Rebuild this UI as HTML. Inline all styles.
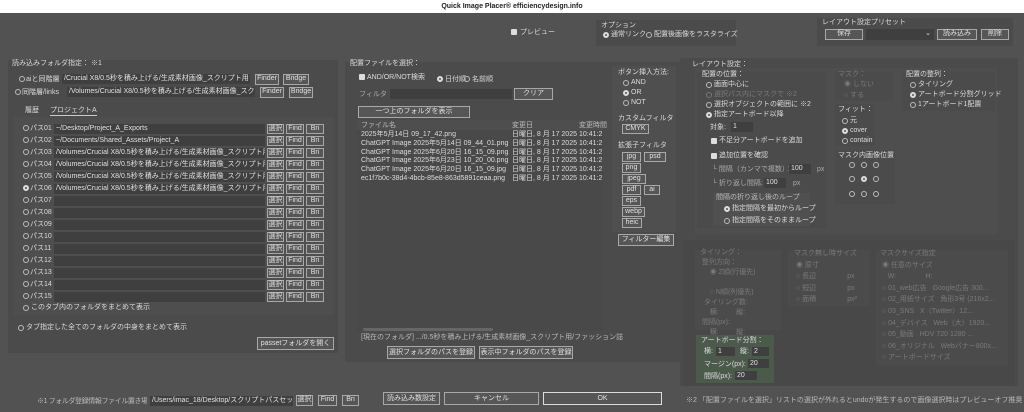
<!DOCTYPE html><html><head><meta charset="utf-8"><style>
*{box-sizing:border-box;margin:0;padding:0}
body{width:1024px;height:412px;overflow:hidden;background:#525252;font-family:"Liberation Sans","Noto Sans CJK JP",sans-serif;font-size:7px;color:#dcdcdc;position:relative}
div,span{position:absolute;white-space:nowrap}
.t{line-height:9px}
.b{border:1px solid #a8a8a8;text-align:center;line-height:8px;background:#565656;color:#e0e0e0}
.f{background:#3f3f3f;line-height:9px;padding-left:2px;overflow:hidden;color:#e2e2e2}
.g{background:#4b4b4b}
.r{width:6px;height:6px;border:1px solid #bbb;border-radius:50%}
.rs{width:6px;height:6px;border:2px solid #ddd;border-radius:50%;background:#555}
.c{width:6px;height:6px;background:#ddd;border-radius:1px}
.d{color:#7a7a7a}
</style></head><body>
<div style="left:0;top:0;width:1024px;height:13px;background:#fff;color:#222;font-weight:bold;text-align:center;line-height:13px;font-size:7px">Quick Image Placer® efficiencydesign.info</div>

<span class="c" style="left:511px;top:29px"></span><span class="t" style="left:520px;top:28px">プレビュー</span>
<div class="g" style="left:596px;top:20px;width:140px;height:26px"></div>
<span class="t" style="left:601px;top:21px">オプション</span>
<span class="rs" style="left:603px;top:32px"></span><span class="t" style="left:611px;top:30px">通常リンク</span>
<span class="r" style="left:646px;top:32px"></span><span class="t" style="left:654px;top:30px">配置後画像をラスタライズ</span>
<div class="g" style="left:817px;top:18px;width:196px;height:28px"></div>
<span class="t" style="left:822px;top:18px">レイアウト設定プリセット</span>
<div class="b" style="left:825px;top:29px;width:38px;height:11px">保存</div>
<div class="f" style="left:866px;top:29px;width:68px;height:11px;text-align:right;padding-right:3px">⌄</div>
<div class="b" style="left:937px;top:29px;width:40px;height:11px">読み込み</div>
<div class="b" style="left:981px;top:29px;width:28px;height:11px">削除</div>

<div class="g" style="left:8px;top:60px;width:330px;height:293px"></div>
<span class="t" style="left:12px;top:59px">読み込みフォルダ指定： ※1</span>
<span class="r" style="left:19px;top:76px"></span><span class="t" style="left:26px;top:75px">aiと同階層</span>
<div class="f" style="left:62px;top:74px;width:188px;height:10px">/Crucial X8/0.5秒を積み上げる/生成素材画像_スクリプト用</div>
<div class="b" style="left:255px;top:74px;width:24px;height:11px">Finder</div>
<div class="b" style="left:283px;top:74px;width:26px;height:11px">Bridge</div>
<span class="r" style="left:15px;top:89px"></span><span class="t" style="left:22px;top:88px">同階層/links</span>
<div class="f" style="left:67px;top:87px;width:188px;height:10px">/Volumes/Crucial X8/0.5秒を積み上げる/生成素材画像_スクリプ</div>
<div class="b" style="left:260px;top:87px;width:24px;height:11px">Finder</div>
<div class="b" style="left:289px;top:87px;width:24px;height:11px">Bridge</div>
<span class="t" style="left:25px;top:106px">履歴</span>
<span class="t" style="left:50px;top:106px;border-bottom:1px solid #ccc">プロジェクトA</span>
<div class="g" style="left:14px;top:117px;width:320px;height:198px;background:#4e4e4e"></div>

<span class="r" style="left:23px;top:125px"></span><span class="t" style="left:30px;top:124px">パス01</span><div class="f" style="left:54px;top:124px;width:211px;height:10px">~/Desktop/Project_A_Exports</div>
<span class="r" style="left:23px;top:137px"></span><span class="t" style="left:30px;top:136px">パス02</span><div class="f" style="left:54px;top:136px;width:211px;height:10px">~/Documents/Shared_Assets/Project_A</div>
<span class="r" style="left:23px;top:149px"></span><span class="t" style="left:30px;top:148px">パス03</span><div class="f" style="left:54px;top:148px;width:211px;height:10px">/Volumes/Crucial X8/0.5秒を積み上げる/生成素材画像_スクリプト用/風</div>
<span class="r" style="left:23px;top:161px"></span><span class="t" style="left:30px;top:160px">パス04</span><div class="f" style="left:54px;top:160px;width:211px;height:10px">/Volumes/Crucial X8/0.5秒を積み上げる/生成素材画像_スクリプト用/フ</div>
<span class="r" style="left:23px;top:173px"></span><span class="t" style="left:30px;top:172px">パス05</span><div class="f" style="left:54px;top:172px;width:211px;height:10px">/Volumes/Crucial X8/0.5秒を積み上げる/生成素材画像_スクリプト用/エ</div>
<span class="rs" style="left:23px;top:185px"></span><span class="t" style="left:30px;top:184px">パス06</span><div class="f" style="left:54px;top:184px;width:211px;height:10px">/Volumes/Crucial X8/0.5秒を積み上げる/生成素材画像_スクリプト用/フ</div>
<span class="r" style="left:23px;top:197px"></span><span class="t" style="left:30px;top:196px">パス07</span><div class="f" style="left:54px;top:196px;width:211px;height:10px"></div>
<span class="r" style="left:23px;top:209px"></span><span class="t" style="left:30px;top:208px">パス08</span><div class="f" style="left:54px;top:208px;width:211px;height:10px"></div>
<span class="r" style="left:23px;top:221px"></span><span class="t" style="left:30px;top:220px">パス09</span><div class="f" style="left:54px;top:220px;width:211px;height:10px"></div>
<span class="r" style="left:23px;top:233px"></span><span class="t" style="left:30px;top:232px">パス10</span><div class="f" style="left:54px;top:232px;width:211px;height:10px"></div>
<span class="r" style="left:23px;top:245px"></span><span class="t" style="left:30px;top:244px">パス11</span><div class="f" style="left:54px;top:244px;width:211px;height:10px"></div>
<span class="r" style="left:23px;top:257px"></span><span class="t" style="left:30px;top:256px">パス12</span><div class="f" style="left:54px;top:256px;width:211px;height:10px"></div>
<span class="r" style="left:23px;top:269px"></span><span class="t" style="left:30px;top:268px">パス13</span><div class="f" style="left:54px;top:268px;width:211px;height:10px"></div>
<span class="r" style="left:23px;top:281px"></span><span class="t" style="left:30px;top:280px">パス14</span><div class="f" style="left:54px;top:280px;width:211px;height:10px"></div>
<span class="r" style="left:23px;top:293px"></span><span class="t" style="left:30px;top:292px">パス15</span><div class="f" style="left:54px;top:292px;width:211px;height:10px"></div>
<div style="left:267px;top:124px;width:60px;height:180px">
<div class="b" style="left:0;top:0;width:17px;height:10px">選択</div><div class="b" style="left:19px;top:0;width:18px;height:10px">Find</div><div class="b" style="left:39px;top:0;width:18px;height:10px">Bri</div>
<div class="b" style="left:0;top:12px;width:17px;height:10px">選択</div><div class="b" style="left:19px;top:12px;width:18px;height:10px">Find</div><div class="b" style="left:39px;top:12px;width:18px;height:10px">Bri</div>
<div class="b" style="left:0;top:24px;width:17px;height:10px">選択</div><div class="b" style="left:19px;top:24px;width:18px;height:10px">Find</div><div class="b" style="left:39px;top:24px;width:18px;height:10px">Bri</div>
<div class="b" style="left:0;top:36px;width:17px;height:10px">選択</div><div class="b" style="left:19px;top:36px;width:18px;height:10px">Find</div><div class="b" style="left:39px;top:36px;width:18px;height:10px">Bri</div>
<div class="b" style="left:0;top:48px;width:17px;height:10px">選択</div><div class="b" style="left:19px;top:48px;width:18px;height:10px">Find</div><div class="b" style="left:39px;top:48px;width:18px;height:10px">Bri</div>
<div class="b" style="left:0;top:60px;width:17px;height:10px">選択</div><div class="b" style="left:19px;top:60px;width:18px;height:10px">Find</div><div class="b" style="left:39px;top:60px;width:18px;height:10px">Bri</div>
<div class="b" style="left:0;top:72px;width:17px;height:10px">選択</div><div class="b" style="left:19px;top:72px;width:18px;height:10px">Find</div><div class="b" style="left:39px;top:72px;width:18px;height:10px">Bri</div>
<div class="b" style="left:0;top:84px;width:17px;height:10px">選択</div><div class="b" style="left:19px;top:84px;width:18px;height:10px">Find</div><div class="b" style="left:39px;top:84px;width:18px;height:10px">Bri</div>
<div class="b" style="left:0;top:96px;width:17px;height:10px">選択</div><div class="b" style="left:19px;top:96px;width:18px;height:10px">Find</div><div class="b" style="left:39px;top:96px;width:18px;height:10px">Bri</div>
<div class="b" style="left:0;top:108px;width:17px;height:10px">選択</div><div class="b" style="left:19px;top:108px;width:18px;height:10px">Find</div><div class="b" style="left:39px;top:108px;width:18px;height:10px">Bri</div>
<div class="b" style="left:0;top:120px;width:17px;height:10px">選択</div><div class="b" style="left:19px;top:120px;width:18px;height:10px">Find</div><div class="b" style="left:39px;top:120px;width:18px;height:10px">Bri</div>
<div class="b" style="left:0;top:132px;width:17px;height:10px">選択</div><div class="b" style="left:19px;top:132px;width:18px;height:10px">Find</div><div class="b" style="left:39px;top:132px;width:18px;height:10px">Bri</div>
<div class="b" style="left:0;top:144px;width:17px;height:10px">選択</div><div class="b" style="left:19px;top:144px;width:18px;height:10px">Find</div><div class="b" style="left:39px;top:144px;width:18px;height:10px">Bri</div>
<div class="b" style="left:0;top:156px;width:17px;height:10px">選択</div><div class="b" style="left:19px;top:156px;width:18px;height:10px">Find</div><div class="b" style="left:39px;top:156px;width:18px;height:10px">Bri</div>
<div class="b" style="left:0;top:168px;width:17px;height:10px">選択</div><div class="b" style="left:19px;top:168px;width:18px;height:10px">Find</div><div class="b" style="left:39px;top:168px;width:18px;height:10px">Bri</div>
</div>
<span class="r" style="left:23px;top:305px"></span><span class="t" style="left:31px;top:303px">このタブ内のフォルダをまとめて表示</span>
<span class="r" style="left:18px;top:325px"></span><span class="t" style="left:26px;top:323px">タブ指定した全てのフォルダの中身をまとめて表示</span>
<div class="b" style="left:257px;top:337px;width:77px;height:13px;line-height:11px">passetフォルダを開く</div>

<div class="g" style="left:345px;top:62px;width:335px;height:300px"></div>
<span class="t" style="left:350px;top:59px">配置ファイルを選択：</span>
<span class="c" style="left:359px;top:74px"></span><span class="t" style="left:367px;top:73px">AND/OR/NOT検索</span>
<span class="rs" style="left:437px;top:76px"></span><span class="t" style="left:445px;top:75px">日付順</span>
<span class="r" style="left:464px;top:76px"></span><span class="t" style="left:472px;top:75px">名前順</span>
<span class="t" style="left:359px;top:90px;color:#aaa">フィルタ：</span>
<div class="f" style="left:390px;top:89px;width:122px;height:10px"></div>
<div class="b" style="left:514px;top:88px;width:39px;height:12px;line-height:10px">クリア</div>
<div class="b" style="left:358px;top:106px;width:112px;height:12px;line-height:10px">一つ上のフォルダを表示</div>
<div style="left:357px;top:120px;width:246px;height:211px;background:#494949"></div>
<div style="left:357px;top:120px;width:246px;height:10px;background:#4e4e4e"></div>
<span class="t" style="left:361px;top:121px;color:#bbb">ファイル名</span><span class="t" style="left:512px;top:121px;color:#bbb">変更日</span><span class="t" style="left:579px;top:121px;color:#bbb">変更時間</span>
<div style="left:361px;top:131px;line-height:8.8px;color:#ddd">2025年5月14日 09_17_42.png<br>ChatGPT Image 2025年5月14日 09_44_01.png<br>ChatGPT Image 2025年6月20日 16_15_09.png<br>ChatGPT Image 2025年6月23日 10_20_00.png<br>ChatGPT Image 2025年6月20日 16_15_09.jpg<br>ec1f7b0c-38d4-4bcb-85e8-863d5891ceaa.png</div>
<div style="left:512px;top:131px;line-height:8.8px;color:#ddd">日曜日, 8 月 17 2025<br>日曜日, 8 月 17 2025<br>日曜日, 8 月 17 2025<br>日曜日, 8 月 17 2025<br>日曜日, 8 月 17 2025<br>日曜日, 8 月 17 2025</div>
<div style="left:579px;top:131px;width:24px;overflow:hidden;line-height:8.8px;color:#ddd">10:41:2<br>10:41:2<br>10:41:2<br>10:41:2<br>10:41:2<br>10:41:2</div>
<div style="left:363px;top:328px;width:130px;height:3px;background:#666;border-radius:2px"></div>
<span class="t" style="left:361px;top:333px;color:#bbb">[現在のフォルダ] .../0.5秒を積み上げる/生成素材画像_スクリプト用/ファッション誌</span>
<div class="b" style="left:387px;top:346px;width:88px;height:13px;line-height:11px">選択フォルダのパスを登録</div>
<div class="b" style="left:479px;top:346px;width:94px;height:13px;line-height:11px">表示中フォルダのパスを登録</div>
<div style="left:612px;top:66px;width:64px;height:166px;background:#4f4f4f"></div>
<span class="t" style="left:618px;top:68px">ボタン挿入方法:</span>
<span class="r" style="left:623px;top:80px"></span><span class="t" style="left:631px;top:78px">AND</span>
<span class="rs" style="left:623px;top:90px"></span><span class="t" style="left:631px;top:88px">OR</span>
<span class="r" style="left:623px;top:100px"></span><span class="t" style="left:631px;top:98px">NOT</span>
<span class="t" style="left:618px;top:114px">カスタムフィルタ</span>
<div class="b" style="left:622px;top:124px;width:27px;height:10px">CMYK</div>
<span class="t" style="left:618px;top:141px">拡張子フィルタ</span>
<div class="b" style="left:622px;top:152px;width:19px;height:10px">jpg</div><div class="b" style="left:644px;top:152px;width:22px;height:10px">psd</div>
<div class="b" style="left:622px;top:163px;width:19px;height:10px">png</div>
<div class="b" style="left:622px;top:174px;width:24px;height:10px">jpeg</div>
<div class="b" style="left:622px;top:185px;width:19px;height:10px">pdf</div><div class="b" style="left:644px;top:185px;width:16px;height:10px">ai</div>
<div class="b" style="left:622px;top:196px;width:19px;height:10px">eps</div>
<div class="b" style="left:622px;top:207px;width:23px;height:10px">webp</div>
<div class="b" style="left:622px;top:218px;width:20px;height:10px">heic</div>
<div class="b" style="left:618px;top:234px;width:56px;height:12px;line-height:10px">フィルター編集</div>

<span class="t" style="left:37px;top:397px;color:#bbb;letter-spacing:-0.4px;width:110px;overflow:hidden">※1 フォルダ登録情報ファイル置き場:</span>
<div class="f" style="left:150px;top:396px;width:143px;height:10px">/Users/imac_18/Desktop/スクリプトパスセッ!</div>
<div class="b" style="left:296px;top:395px;width:17px;height:11px">選択</div>
<div class="b" style="left:318px;top:395px;width:19px;height:11px">Find</div>
<div class="b" style="left:342px;top:395px;width:17px;height:11px">Bri</div>
<div class="b" style="left:383px;top:392px;width:57px;height:13px;line-height:11px">読み込み数設定</div>
<div class="b" style="left:444px;top:392px;width:95px;height:13px;line-height:11px">キャンセル</div>
<div class="b" style="left:543px;top:392px;width:119px;height:13px;line-height:11px;border-color:#ddd">OK</div>

<div class="g" style="left:680px;top:58px;width:338px;height:328px"></div>
<span class="t" style="left:692px;top:60px">レイアウト設定：</span>
<div style="left:695px;top:68px;width:302px;height:166px;background:#4e4e4e"></div>
<div style="left:697px;top:72px;width:130px;height:156px;background:#4b4b4b"></div>
<span class="t" style="left:702px;top:70px">配置の位置：</span>
<span class="r" style="left:706px;top:82px"></span><span class="t" style="left:714px;top:80px">画面中心に</span>
<span class="r d" style="left:706px;top:92px;border-color:#777"></span><span class="t d" style="left:714px;top:90px">選択パス内にマスクで ※2</span>
<span class="r" style="left:706px;top:102px"></span><span class="t" style="left:714px;top:100px">選択オブジェクトの範囲に ※2</span>
<span class="rs" style="left:706px;top:112px"></span><span class="t" style="left:714px;top:110px">指定アートボード以降</span>
<span class="t" style="left:710px;top:123px">対象:</span><div class="f" style="left:731px;top:122px;width:22px;height:10px">1</div>
<span class="c" style="left:711px;top:138px"></span><span class="t" style="left:719px;top:136px">不足分アートボードを追加</span>
<span class="c" style="left:711px;top:153px"></span><span class="t" style="left:719px;top:151px">追加位置を確認</span>
<span class="t" style="left:712px;top:165px;color:#aaa">└ 間隔（カンマで複数）：</span><div class="f" style="left:789px;top:164px;width:22px;height:10px">100</div><span class="t" style="left:817px;top:165px;color:#aaa">px</span>
<span class="t" style="left:712px;top:179px;color:#aaa">└ 折り返し間隔:</span><div class="f" style="left:764px;top:178px;width:22px;height:10px">100</div><span class="t" style="left:793px;top:179px;color:#aaa">px</span>
<div style="left:713px;top:193px;width:97px;height:33px;background:#505050"></div>
<span class="t" style="left:716px;top:193px;color:#bbb">間隔の折り返し後のループ</span>
<span class="rs" style="left:724px;top:206px"></span><span class="t" style="left:732px;top:204px">指定間隔を最初からループ</span>
<span class="r" style="left:724px;top:218px"></span><span class="t" style="left:732px;top:216px">指定間隔をそのままループ</span>
<div style="left:835px;top:72px;width:58px;height:29px;background:#4b4b4b"></div>
<span class="t d" style="left:838px;top:70px">マスク：</span>
<span class="t d" style="left:844px;top:80px">◉ しない</span><span class="t d" style="left:844px;top:91px">○ する</span>
<div style="left:835px;top:104px;width:40px;height:42px;background:#4b4b4b"></div>
<span class="t" style="left:838px;top:105px">フィット：</span>
<span class="r" style="left:842px;top:118px"></span><span class="t" style="left:850px;top:116px">元</span>
<span class="rs" style="left:842px;top:128px"></span><span class="t" style="left:850px;top:126px">cover</span>
<span class="r" style="left:842px;top:138px"></span><span class="t" style="left:850px;top:136px">contain</span>
<div style="left:835px;top:150px;width:60px;height:54px;background:#4b4b4b"></div>
<span class="t" style="left:838px;top:151px">マスク内画像位置</span>
<span class="r" style="left:849px;top:162px"></span><span class="r" style="left:861px;top:162px"></span><span class="r" style="left:873px;top:162px"></span>
<span class="r" style="left:849px;top:176px"></span><span class="rs" style="left:861px;top:176px"></span><span class="r" style="left:873px;top:176px"></span>
<span class="r" style="left:849px;top:191px"></span><span class="r" style="left:861px;top:191px"></span><span class="r" style="left:873px;top:191px"></span>
<div style="left:902px;top:72px;width:93px;height:39px;background:#4b4b4b"></div>
<span class="t" style="left:906px;top:70px">配置の整列：</span>
<span class="r" style="left:910px;top:82px"></span><span class="t" style="left:918px;top:80px">タイリング</span>
<span class="rs" style="left:910px;top:92px"></span><span class="t" style="left:918px;top:90px">アートボード分割グリッド</span>
<span class="r" style="left:910px;top:102px"></span><span class="t" style="left:918px;top:100px">1アートボード1配置</span>

<div style="left:683px;top:240px;width:332px;height:146px;background:#484848"></div>
<div style="left:695px;top:250px;width:86px;height:80px;background:#4b4b4b"></div>
<div class="t d" style="left:700px;top:248px;line-height:10px">タイリング：<br>&nbsp;整列方向：<br>&nbsp;&nbsp;&nbsp;&nbsp;&nbsp;◉ Z順(行優先)<br><br>&nbsp;&nbsp;&nbsp;&nbsp;&nbsp;○ N順(列優先)<br>&nbsp;&nbsp;タイリング数:<br>&nbsp;&nbsp;&nbsp;&nbsp;&nbsp;横: &nbsp;&nbsp;&nbsp;&nbsp;&nbsp;&nbsp;&nbsp;&nbsp;縦:<br>&nbsp;間隔(px):<br>&nbsp;&nbsp;&nbsp;&nbsp;&nbsp;横: &nbsp;&nbsp;&nbsp;&nbsp;&nbsp;&nbsp;&nbsp;&nbsp;縦:</div>
<div style="left:696px;top:335px;width:78px;height:48px;background:#4c5a4c"></div>
<span class="t" style="left:701px;top:336px">アートボード分割：</span>
<span class="t" style="left:704px;top:347px">横:</span><div class="f" style="left:716px;top:347px;width:19px;height:9px">1</div>
<span class="t" style="left:740px;top:347px">縦:</span><div class="f" style="left:752px;top:347px;width:17px;height:9px">2</div>
<span class="t" style="left:704px;top:360px">マージン(px):</span><div class="f" style="left:748px;top:359px;width:21px;height:9px">20</div>
<span class="t" style="left:704px;top:372px">間隔(px):</span><div class="f" style="left:735px;top:371px;width:22px;height:9px">20</div>
<div style="left:788px;top:250px;width:82px;height:56px;background:#4b4b4b"></div>
<div class="t d" style="left:794px;top:248px;line-height:11.5px">マスク無し時サイズ<br>&nbsp;◉ 原寸<br>&nbsp;○ 長辺 &nbsp;&nbsp;&nbsp;&nbsp;&nbsp;&nbsp;&nbsp;&nbsp;&nbsp;&nbsp;&nbsp;&nbsp;&nbsp;&nbsp;&nbsp;px<br>&nbsp;○ 短辺 &nbsp;&nbsp;&nbsp;&nbsp;&nbsp;&nbsp;&nbsp;&nbsp;&nbsp;&nbsp;&nbsp;&nbsp;&nbsp;&nbsp;&nbsp;px<br>&nbsp;○ 面積 &nbsp;&nbsp;&nbsp;&nbsp;&nbsp;&nbsp;&nbsp;&nbsp;&nbsp;&nbsp;&nbsp;&nbsp;&nbsp;&nbsp;&nbsp;px²</div>
<div style="left:876px;top:250px;width:132px;height:116px;background:#4b4b4b"></div>
<div class="t d" style="left:880px;top:248px;line-height:11.6px">マスクサイズ指定<br>&nbsp;◉ 任意のサイズ<br>&nbsp;&nbsp;&nbsp;&nbsp;W: &nbsp;&nbsp;&nbsp;&nbsp;&nbsp;&nbsp;&nbsp;&nbsp;&nbsp;&nbsp;&nbsp;&nbsp;&nbsp;&nbsp;H:<br>&nbsp;○ 01_web広告 &nbsp;&nbsp;Google広告 300...<br>&nbsp;○ 02_用紙サイズ &nbsp;&nbsp;角形3号 (216x2...<br>&nbsp;○ 03_SNS &nbsp;&nbsp;X（Twitter）12...<br>&nbsp;○ 04_デバイス &nbsp;&nbsp;Web（大）1920...<br>&nbsp;○ 05_動画 &nbsp;&nbsp;HDV 720 1280 ...<br>&nbsp;○ 06_オリジナル &nbsp;&nbsp;Webバナー800x...<br>&nbsp;○ アートボードサイズ</div>
<span class="t" style="left:686px;top:396px;color:#bbb">※2 「配置ファイルを選択」リストの選択が外れるとundoが発生するので画像選択時はプレビューオフ推奨</span>
</body></html>
